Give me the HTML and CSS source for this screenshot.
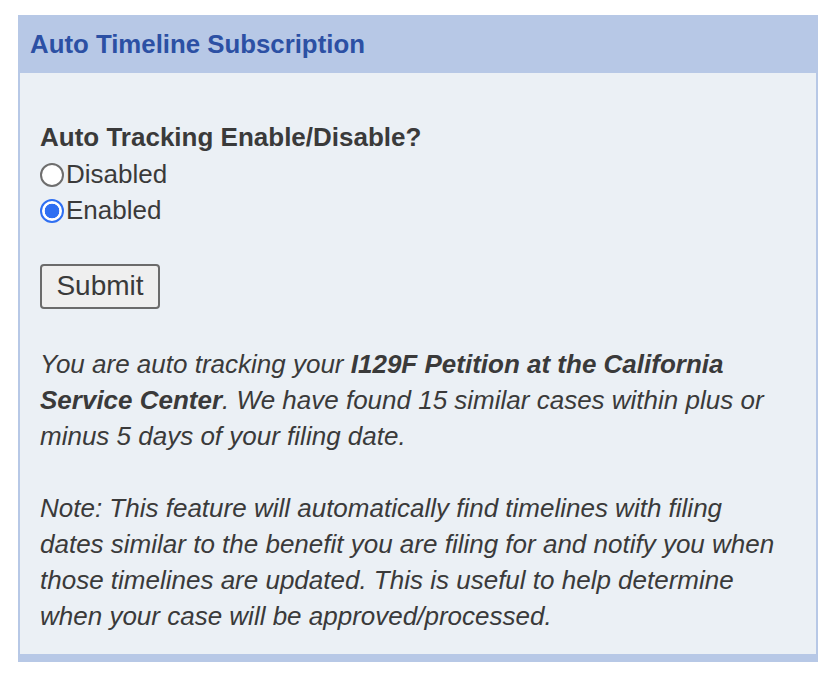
FILE: index.html
```html
<!DOCTYPE html>
<html lang="en">
<head>
<meta charset="utf-8">
<title>Auto Timeline Subscription</title>
<link rel="stylesheet" href="styles.css">
</head>
<body>
<div class="page">
  <section class="panel">
    <header class="panel-head">
      <h2 class="panel-title">Auto Timeline Subscription</h2>
    </header>
    <form class="panel-body">
      <div class="question">Auto Tracking Enable/Disable?</div>
      <label class="option"><input type="radio" name="track" class="radio">Disabled</label>
      <label class="option"><input type="radio" name="track" class="radio" checked>Enabled</label>
      <div class="actions"><button type="button" class="btn">Submit</button></div>
      <p class="note">You are auto tracking your <b>I129F Petition at the California Service Center</b>. We have found 15 similar cases within plus or minus 5 days of your filing date.</p>
      <p class="note">Note: This feature will automatically find timelines with filing dates similar to the benefit you are filing for and notify you when those timelines are updated. This is useful to help determine when your case will be approved/processed.</p>
    </form>
  </section>
</div>
</body>
</html>
```
FILE: styles.css
```css
html, body {
  margin: 0;
  padding: 0;
  background: #ffffff;
}
body {
  font-family: "Liberation Sans", Arial, Helvetica, sans-serif;
  color: #3a3a3a;
}
.page {
  padding: 15px 12px 0 18px;
}
.panel {
  width: 800px;
  background: #b7c8e6;
  padding: 0 2px 8px 2px;
  box-sizing: border-box;
}
.panel-head {
  height: 58px;
  display: flex;
  align-items: center;
  margin: 0 -2px;
  padding-left: 12px;
}
.panel-title {
  margin: 0;
  font-size: 25.8px;
  font-weight: bold;
  color: #2c50a4;
  line-height: 1;
  position: relative;
  top: 1px;
}
.panel-body {
  display: flex;
  flex-direction: column;
  align-items: flex-start;
  background: #ebf0f5;
  padding: 46px 30px 20px 20px;
  font-size: 26px;
  line-height: 36.5px;
}
.question {
  font-weight: bold;
}
.option {
  display: flex;
  align-items: center;
  height: 36.5px;
}
.radio {
  appearance: none;
  -webkit-appearance: none;
  width: 24px;
  height: 24px;
  margin: 0 2px 0 0;
  border: 2px solid #6e6e6e;
  border-radius: 50%;
  background: #ffffff;
  box-sizing: border-box;
  position: relative;
  top: 1px;
}
.radio:checked {
  border-color: #2f6ff2;
  background: radial-gradient(circle, #2f6ff2 0 7px, #ffffff 7.6px);
}
.actions {
  margin-top: 35px;
}
.btn {
  font-family: "Liberation Sans", Arial, Helvetica, sans-serif;
  font-size: 28px;
  color: #3a3a3a;
  background: #efefef;
  border: 2px solid #6b6b6b;
  border-radius: 4px;
  height: 45px;
  width: 120px;
  padding: 0;
  line-height: 1;
}
.note {
  margin: 37px 0 0 0;
  font-style: italic;
  line-height: 36px;
}
.note + .note {
  margin-top: 36px;
}
.note b {
  font-weight: bold;
}
```
